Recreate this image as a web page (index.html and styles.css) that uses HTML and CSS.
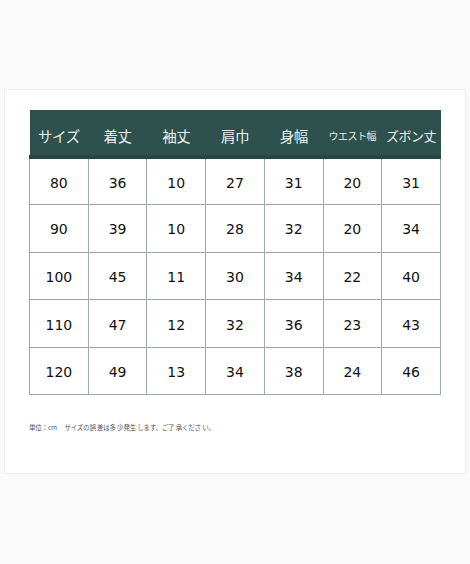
FILE: index.html
```html
<!DOCTYPE html>
<html lang="ja">
<head>
<meta charset="utf-8">
<link rel="stylesheet" href="styles.css">
</head>
<body>
<div class="card">
  <table class="size-table">
    <thead>
      <tr>
        <th>サイズ</th><th>着丈</th><th>袖丈</th><th>肩巾</th><th>身幅</th><th class="small">ウエスト幅</th><th class="mid">ズボン丈</th>
      </tr>
    </thead>
    <tbody>
      <tr><td>80</td><td>36</td><td>10</td><td>27</td><td>31</td><td>20</td><td>31</td></tr>
      <tr><td>90</td><td>39</td><td>10</td><td>28</td><td>32</td><td>20</td><td>34</td></tr>
      <tr><td>100</td><td>45</td><td>11</td><td>30</td><td>34</td><td>22</td><td>40</td></tr>
      <tr><td>110</td><td>47</td><td>12</td><td>32</td><td>36</td><td>23</td><td>43</td></tr>
      <tr><td>120</td><td>49</td><td>13</td><td>34</td><td>38</td><td>24</td><td>46</td></tr>
    </tbody>
  </table>
  <p class="note">単位：cm　 サイズの誤 差は多 少発生 します。ご了 承くださ い。</p>
</div>
</body>
</html>
```
FILE: styles.css
```css
html, body {
  margin: 0;
  padding: 0;
}
body {
  background: #fafafa;
  width: 470px;
  height: 564px;
  overflow: hidden;
}
.card {
  box-sizing: border-box;
  margin: 89px 0 0 4px;
  width: 462px;
  height: 385px;
  background: #ffffff;
  border: 1px solid #ededed;
  padding: 20px 0 0 24px;
}
.size-table {
  border-collapse: collapse;
  table-layout: fixed;
  width: 412px;
}
.size-table th {
  box-sizing: border-box;
  height: 47px;
  background: #2f514d;
  border-bottom: 4px solid #274541;
  color: #e9eeec;
  font-family: "Noto Sans CJK JP", sans-serif;
  font-weight: 400;
  font-size: 14.5px;
  padding: 6px 0 0;
  text-align: center;
  white-space: nowrap;
  letter-spacing: -0.5px;
}
.size-table th.small {
  font-size: 10px;
  letter-spacing: -0.5px;
}
.size-table th.mid {
  font-size: 13px;
}
.size-table td {
  box-sizing: border-box;
  height: 47.6px;
  border: 1px solid #9ea8a7;
  text-align: center;
  font-family: "DejaVu Sans", sans-serif;
  font-size: 14px;
  color: #111;
  padding: 2px 0 0;
}
.note {
  margin: 27px 0 0;
  font-family: "Noto Sans CJK JP", sans-serif;
  font-size: 6.5px;
  color: #555;
  letter-spacing: -0.2px;
}
```
